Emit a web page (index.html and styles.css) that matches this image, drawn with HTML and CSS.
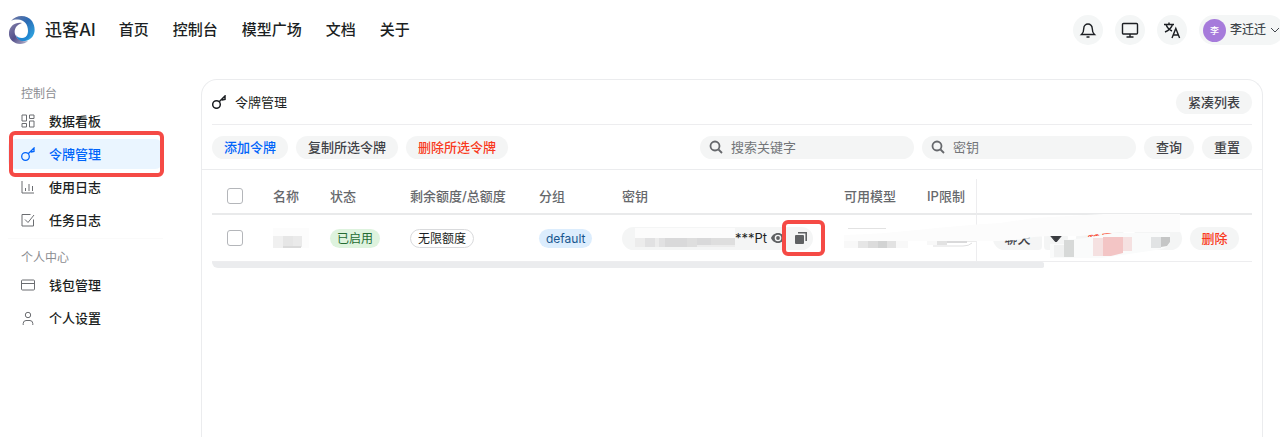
FILE: index.html
```html
<!DOCTYPE html>
<html lang="zh-CN">
<head>
  <meta charset="UTF-8">
  <meta name="viewport" content="width=device-width, initial-scale=1.0">
  <title>令牌管理 - 迅客AI</title>
  <link rel="stylesheet" href="styles.css">
</head>
<body>
  <header class="header">
    <a class="brand" href="#">
      <svg class="logo" viewBox="0 0 26 28" width="26" height="28" aria-hidden="true">
        <defs>
          <linearGradient id="blue" x1="0" y1="0" x2="1" y2="1">
            <stop offset="0" stop-color="#77769f"/>
            <stop offset="0.45" stop-color="#2a6bb5"/>
            <stop offset="1" stop-color="#2fb4ec"/>
          </linearGradient>
          <linearGradient id="purple" x1="0" y1="0" x2="1" y2="1">
            <stop offset="0" stop-color="#8583ad"/>
            <stop offset="0.5" stop-color="#54508a"/>
            <stop offset="1" stop-color="#b9b7cf"/>
          </linearGradient>
        </defs>
        <path d="M2 5C8-2 18-1 23 5c5 8 3 18-7 20 -3 .7-6 .2-8-1 6 0 11-3 11-9C19 8 15 4 9 3.600 6 3.500 4 4 2 5z" fill="url(#blue)"/>
        <path d="M13 7C6 6 1 10 0 16c-1 6 4 12 11 12 3 0 6-1 8-3 -5 1-10-1-12-5C4 16 6 9 13 7z" fill="url(#purple)"/>
        <path d="M20 13c1 4-2 9-7 9 -3 0-5-1-6-3 1 5 6 7 10 5C22 21 22 16 20 13z" fill="#2187d2"/>
      </svg>
      <span>迅客AI</span>
    </a>
    <nav class="menu">
      <a href="#">首页</a>
      <a href="#">控制台</a>
      <a href="#">模型广场</a>
      <a href="#">文档</a>
      <a href="#">关于</a>
    </nav>
    <div class="tools">
      <button class="round" aria-label="通知">
        <svg viewBox="0 0 18 18" width="18" height="18"><path d="M2.500 13.500h13c-1.700-1.500-2.300-3.300-2.300-6.300a4.200 4.200 0 0 0-8.400 0c0 3-.6 4.800-2.300 6.300zM7.500 16h3"/></svg>
      </button>
      <button class="round" aria-label="主题">
        <svg viewBox="0 0 18 18" width="18" height="18"><rect x="1.500" y="2.500" width="15" height="10.500" rx="1"/><path d="M9 13v3M5.500 16h7"/></svg>
      </button>
      <button class="round" aria-label="语言">
        <svg viewBox="0 0 18 18" width="18" height="18"><path d="M1 3.500h10M6 1.500v2M9.500 3.500C8.500 7 5.500 9.500 2 11M3 3.500c1 3 3 5 6 6.500M9 17l3.800-9.500L16.600 17M10.300 14h5"/></svg>
      </button>
      <button class="user">
        <span class="avatar">李</span>
        <span>李迁迁</span>
        <svg viewBox="0 0 10 10" width="10" height="10"><path d="M1 3l4 4 4-4"/></svg>
      </button>
    </div>
  </header>

  <div class="layout">
    <aside class="sidebar">
      <h2>控制台</h2>
      <ul>
        <li><a href="#">
          <svg viewBox="0 0 14 14" width="14" height="14"><path d="M1 1h4.500v6H1zM8.500 1H13v3.500H8.500zM8.500 7H13v6H8.500zM1 9.500h4.500V13H1z"/></svg>
          数据看板</a></li>
        <li class="marked"><a class="active" href="#">
          <svg viewBox="0 0 14 14" width="14" height="14"><circle cx="4.500" cy="9.500" r="3.800"/><path d="M7.200 6.800L13 1v3.500l-2.500.5-.5-1.500"/></svg>
          令牌管理</a></li>
        <li><a href="#">
          <svg viewBox="0 0 14 14" width="14" height="14"><path d="M1 1v12h12M4.500 8v3M8 4v7M11.500 6v5"/></svg>
          使用日志</a></li>
        <li><a href="#">
          <svg viewBox="0 0 14 14" width="14" height="14"><path d="M12.500 6.500V13H1V1.500h8.500M4 6.500l3 3 6-7.500"/></svg>
          任务日志</a></li>
      </ul>
      <h2 class="second">个人中心</h2>
      <ul>
        <li><a href="#">
          <svg viewBox="0 0 14 14" width="14" height="14"><rect x=".5" y="2" width="13" height="10" rx="1"/><path d="M.5 5.500h13"/></svg>
          钱包管理</a></li>
        <li><a href="#">
          <svg viewBox="0 0 14 14" width="14" height="14"><circle cx="7" cy="4" r="2.700"/><path d="M2.200 14v-1.500A3 3 0 0 1 5 9.500h4a3 3 0 0 1 2.800 3V14"/></svg>
          个人设置</a></li>
      </ul>
    </aside>

    <main class="card">
      <div class="card-head">
        <h1>
          <svg viewBox="0 0 14 14" width="14" height="14"><circle cx="4.500" cy="9.500" r="3.800"/><path d="M7.200 6.800L13 1v3.500l-2.500.5-.5-1.500"/></svg>
          令牌管理
        </h1>
        <button class="btn">紧凑列表</button>
      </div>

      <div class="toolbar">
        <button class="btn primary">添加令牌</button>
        <button class="btn">复制所选令牌</button>
        <button class="btn danger">删除所选令牌</button>
        <form class="search">
          <label class="field">
            <svg viewBox="0 0 14 14" width="14" height="14"><circle cx="6" cy="6" r="4.500"/><path d="M9.500 9.500L13 13"/></svg>
            <input type="text" placeholder="搜索关键字" aria-label="搜索关键字">
          </label>
          <label class="field">
            <svg viewBox="0 0 14 14" width="14" height="14"><circle cx="6" cy="6" r="4.500"/><path d="M9.500 9.500L13 13"/></svg>
            <input type="text" placeholder="密钥" aria-label="密钥">
          </label>
          <button type="button" class="btn">查询</button>
          <button type="reset" class="btn">重置</button>
        </form>
      </div>

      <div class="table-wrap">
        <table>
          <colgroup>
            <col class="c-check"><col class="c-name"><col class="c-status"><col class="c-quota"><col class="c-group"><col class="c-key"><col class="c-model"><col class="c-ip"><col>
          </colgroup>
          <thead>
            <tr>
              <th><input type="checkbox" aria-label="全选"></th>
              <th>名称</th>
              <th>状态</th>
              <th>剩余额度/总额度</th>
              <th>分组</th>
              <th>密钥</th>
              <th>可用模型</th>
              <th>IP限制</th>
              <th class="ops" aria-label="操作"></th>
            </tr>
          </thead>
          <tbody>
            <tr>
              <td><input type="checkbox" aria-label="选择令牌"></td>
              <td>
                <svg class="mosaic" viewBox="0 0 36 20" width="36" height="20">
                  <path fill="#fcfcfc" d="M0 0h36v20H0z"/>
                  <path fill="#f0f0f0" d="M0 8h10v12H0z"/><path fill="#e6e6e6" d="M10 8h10v10H10z"/><path fill="#eaeaea" d="M20 8h9v11h-9z"/><path fill="#dadada" d="M10 18h18v2H10z"/>
                </svg>
              </td>
              <td><span class="tag green">已启用</span></td>
              <td><span class="tag outline">无限额度</span></td>
              <td><span class="tag blue">default</span></td>
              <td>
                <div class="key">
                  <svg class="mosaic" viewBox="0 0 100 20" width="100" height="20">
                    <path fill="#fcfcfc" d="M0 0h100v10H0z"/>
                    <path fill="#ececec" d="M0 10h100v9H0z"/><path fill="#e1e1e2" d="M10 10h10v9H10zM24 10h6v9h-6z"/><path fill="#d9d9da" d="M30 10h22v9H30zM62 10h14v7H62z"/><path fill="#dedede" d="M52 10h10v9H52zM76 10h24v7H76z"/>
                  </svg>
                  <span>***Pt</span>
                  <button class="icon" aria-label="显示">
                    <svg viewBox="0 0 14 14" width="14" height="14"><path fill="#5f6163" fill-rule="evenodd" d="M7 2C3.500 2 1 4.500 0 7c1 2.500 3.500 5 7 5s6-2.500 7-5c-1-2.500-3.500-5-7-5zm0 1.700a3.300 3.300 0 1 1 0 6.600 3.300 3.300 0 0 1 0-6.600z"/><circle cx="7" cy="7" r="1.900" fill="#5f6163"/></svg>
                  </button>
                  <button class="icon copy" aria-label="复制">
                    <svg viewBox="0 0 14 14" width="14" height="14"><rect x="1" y="4" width="9" height="9" rx="1" fill="#5f6163"/><path d="M4 1.800h8.200v8.200" fill="none" stroke="#5f6163" stroke-width="1.600"/></svg>
                  </button>
                </div>
              </td>
              <td>
                <svg class="mosaic" viewBox="0 0 64 20" width="64" height="20">
                  <path fill="#f8f8f8" d="M0 8h64v12H0z"/><path fill="#e2e2e2" d="M4 0h38v1H4z"/>
                  <path fill="#e6e6e6" d="M14 8h10v12H14z"/><path fill="#dcdcdc" d="M24 8h10v12H24z"/><path fill="#d2d3d3" d="M34 8h9v12h-9z"/><path fill="#e2e2e2" d="M43 8h9v12h-9z"/>
                </svg>
              </td>
              <td>
                <svg class="mosaic" viewBox="0 0 60 20" width="60" height="20">
                  <path fill="#f8f8f8" d="M0 8h20v9H0z"/><path fill="#e2e2e2" d="M10 8h10v9H10z"/><path fill="#d9d9da" d="M20 8h20v7H20z"/><path fill="#ebebeb" d="M40 8h10v6H40z"/>
                  <path d="M6 18h30q6 0 9-3" fill="none" stroke="#dfdfe0"/>
                </svg>
              </td>
              <td class="ops">
                <div class="actions">
                  <div class="split">
                    <button class="btn">聊天</button>
                    <button class="btn arrow" aria-label="更多"><svg viewBox="0 0 10 6" width="12" height="7"><path fill="#3a3c40" d="M0 0h10L5 6z"/></svg></button>
                  </div>
                  <button class="btn danger">禁用</button>
                  <button class="btn" aria-label="编辑"></button>
                  <button class="btn danger">删除</button>
                </div>
                <svg class="smear" viewBox="0 0 336 48" width="336" height="48" aria-hidden="true">
                  <path fill="#fcfcfc" d="M0 21C50 20 100 12 156 9L190 4l70-4h76v18h-60l-40 4h-32l-14 1-18 3-18 1H0z"/>
                  <path fill="#fafbfb" d="M206 30h14v-4l22-2 26-5h58v10q-3 6-14 7l-54 8H206z"/>
                  <path fill="#d7d9d8" d="M220 26h10v17h-10z"/><path fill="#f0f1f1" d="M210 31h10v12h-10z"/>
                  <path fill="#f5e1e1" d="M249 24h10v18h-10zM278 23h10v14h-10z"/>
                  <path fill="#f3c5c5" d="M259 23h20v16l-12 3h-8z"/>
                  <path fill="#e1e3e4" d="M307 23h10v11h-10z"/><path fill="#c5c6c6" d="M317 23h9v5l-3 4-6 1z"/>
                </svg>
              </td>
            </tr>
          </tbody>
        </table>
        <div class="scrollbar"></div>
      </div>
    </main>
  </div>
</body>
</html>
```
FILE: styles.css
```css
* {
  box-sizing: border-box;
}

body {
  margin: 0;
  font-family: Inter, 'Noto Sans CJK SC', sans-serif;
  font-size: 13px;
  line-height: 20px;
  color: #1c1f23;
  background: #fff;
  overflow-x: hidden;
}

a {
  color: inherit;
  text-decoration: none;
}

button {
  font: inherit;
  color: inherit;
  border: 0;
  padding: 0;
  cursor: pointer;
}

svg {
  display: block;
  flex: none;
  fill: none;
  stroke: currentColor;
}

/* Header */
.header {
  display: flex;
  align-items: center;
  height: 60px;
  padding-left: 9px;
  font-weight: 500;
}

.brand {
  display: flex;
  align-items: center;
  gap: 10px;
  font-size: 17px;
}

.logo,
.mosaic,
.smear {
  stroke: none;
}

.menu {
  display: flex;
  gap: 24px;
  margin-left: 23px;
  font-size: 15px;
}

.tools {
  display: flex;
  gap: 12px;
  margin-left: auto;
  margin-right: -4px;
}

.round {
  display: flex;
  align-items: center;
  justify-content: center;
  width: 30px;
  height: 30px;
  border-radius: 50%;
  background: #f4f6f6;
}

.round svg {
  stroke-width: 1.4;
}

.user {
  display: flex;
  align-items: center;
  gap: 4px;
  height: 30px;
  padding: 0 4px;
  border-radius: 15px;
  background: #f4f6f6;
  color: #41464c;
  font-size: 12px;
}

.avatar {
  width: 23px;
  height: 23px;
  border-radius: 50%;
  background: #a67bdb;
  color: #fff;
  font-size: 9px;
  line-height: 23px;
}

/* Layout */
.layout {
  display: flex;
  min-height: calc(100vh - 60px);
}

.sidebar {
  flex: none;
  width: 201px;
  padding: 24px 38px 0 8px;
}

.sidebar h2 {
  margin: 0;
  padding-left: 13px;
  font-size: 12px;
  font-weight: 400;
  color: #8b8d91;
}

.sidebar .second {
  margin-top: 2px;
  padding-top: 9px;
  border-top: 1px solid #fafafa;
}

.sidebar ul {
  list-style: none;
  margin: 0;
  padding: 2px 0 0;
}

.sidebar li {
  margin-bottom: 3px;
}

.sidebar li a {
  display: flex;
  align-items: center;
  gap: 14px;
  height: 30px;
  padding-left: 13px;
  border-radius: 8px;
  font-weight: 500;
}

.sidebar svg {
  color: #6b6d71;
}

.sidebar .active {
  color: #0064fa;
  background: #eaf5ff;
}

.sidebar .active svg {
  color: #0064fa;
  stroke-width: 1.3;
}

/* Red highlight frames */
.marked,
.copy {
  position: relative;
}

.marked::after,
.copy::after {
  content: '';
  position: absolute;
  inset: -8px -1px -8px 1px;
  border: 4px solid #f54a45;
  border-radius: 6px;
}

/* Card */
.card {
  flex: 1;
  min-width: 0;
  margin: 19px 17px 0 0;
  border: 1px solid #ebecee;
  border-bottom: 0;
  border-radius: 16px 16px 0 0;
}

.card-head {
  display: flex;
  align-items: center;
  justify-content: space-between;
  height: 45px;
  margin: 0 10px;
  border-bottom: 1px solid #ededef;
}

.card-head h1 {
  display: flex;
  align-items: center;
  gap: 9px;
  margin: 0;
  font-size: 13px;
  font-weight: 400;
}

.card-head h1 svg {
  stroke-width: 1.5;
}

.btn {
  height: 23px;
  padding: 0 12px;
  border-radius: 12px;
  background: #f4f5f5;
  color: #3f4146;
  font-weight: 500;
  line-height: 23px;
  white-space: nowrap;
}

.primary {
  color: #0064fa;
}

.danger {
  color: #f93920;
}

.toolbar {
  display: flex;
  align-items: center;
  gap: 8px;
  height: 45px;
  padding: 0 10px;
  border-bottom: 1px solid #ebecee;
}

.search {
  display: flex;
  gap: 8px;
  margin-left: auto;
}

.field {
  display: flex;
  align-items: center;
  gap: 8px;
  width: 214px;
  height: 23px;
  padding: 0 9px;
  border-radius: 12px;
  background: #f4f5f5;
  color: #66686c;
}

.field svg {
  stroke-width: 1.8;
}

.field input {
  width: 100%;
  min-width: 0;
  border: 0;
  padding: 0;
  background: none;
  outline: none;
  font: inherit;
}

.field input::placeholder {
  color: #737579;
}

/* Table */
.table-wrap {
  margin: 9px 10px 0;
}

table {
  width: 100%;
  table-layout: fixed;
  border-collapse: separate;
  border-spacing: 0;
}

.c-check { width: 51px; }
.c-name { width: 57px; }
.c-status { width: 80px; }
.c-quota { width: 129px; }
.c-group { width: 83px; }
.c-key { width: 222px; }
.c-model { width: 83px; }
.c-ip { width: 59px; }

th {
  height: 36px;
  padding: 0 0 0 10px;
  border-bottom: 2px solid #e9eaeb;
  color: #66686c;
  font-weight: 500;
  text-align: left;
  white-space: nowrap;
}

td {
  height: 47px;
  padding: 0 0 0 10px;
  border-bottom: 1px solid #ededef;
}

th:first-child,
td:first-child {
  padding-left: 15px;
}

.ops {
  position: relative;
  padding-left: 16px;
  border-left: 1px solid #ededef;
}

input[type="checkbox"] {
  appearance: none;
  display: block;
  width: 16px;
  height: 16px;
  margin: 0;
  border: 1px solid #b4b6ba;
  border-radius: 3px;
  background: #fff;
}

.tag {
  display: inline-block;
  height: 19px;
  padding: 0 7px;
  border-radius: 10px;
  font-size: 12px;
  line-height: 19px;
  white-space: nowrap;
  vertical-align: middle;
}

.green {
  background: #def3de;
  color: #246b32;
}

.outline {
  border: 1px solid #d9dadc;
  line-height: 17px;
}

.blue {
  background: #dcedfd;
  color: #17568f;
}

.key {
  display: flex;
  align-items: center;
  width: 191px;
  height: 23px;
  padding-left: 13px;
  border-radius: 12px;
  background: #f4f5f5;
}

.icon {
  background: none;
}

.icon svg {
  stroke: none;
}

.key .icon {
  margin-left: 4px;
}

.key .copy {
  margin-left: 9px;
}

.copy::after {
  inset: -11px -17px -11px -12px;
}

.actions,
.split {
  display: flex;
  gap: 8px;
}

.split {
  gap: 2px;
}

.split .btn:first-child {
  width: 49px;
  padding: 0;
  border-radius: 12px 4px 4px 12px;
}

.arrow {
  padding: 0 6px;
  border-radius: 4px 12px 12px 4px;
}

.actions > .btn {
  width: 49px;
  padding: 0;
}

.smear {
  position: absolute;
  top: -1px;
  left: -133px;
}

.scrollbar {
  width: 80%;
  height: 6px;
  border-radius: 0 3px 3px 10px;
  background: #ebecee;
}
```
